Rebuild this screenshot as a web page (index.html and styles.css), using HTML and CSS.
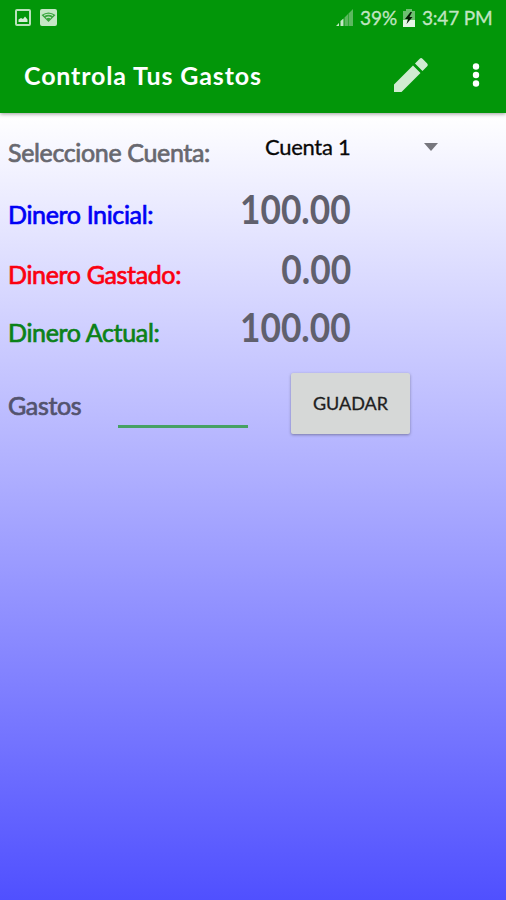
FILE: index.html
```html
<!DOCTYPE html>
<html lang="es">
<head>
<meta charset="utf-8">
<title>Controla Tus Gastos</title>
<link rel="stylesheet" href="styles.css">
</head>
<body>
<header class="top">
  <div class="status">
    <svg class="notice" width="44" height="18" viewBox="0 0 44 18">
      <rect x="1" y="1" width="14" height="15" rx="1" fill="none" stroke="#b9e2bb" stroke-width="2"/>
      <path d="M3.500 13V10.500L6 9l2 1 2-2.500 2.500 3V13z" fill="#d5edd6"/>
      <rect x="25" y="0" width="17" height="17" rx="2" fill="#c5e7c6"/>
      <path d="M26.500 6q7-5 14 0L33.500 13z" fill="#3aa63e"/>
      <path d="M29 6.500q4.500-2.500 9 0M31 9q2.500-1.800 5 0" fill="none" stroke="#c5e7c6" stroke-width="1.200"/>
    </svg>
    <svg class="signal" width="18" height="18" viewBox="0 0 18 18">
      <path d="M0 17l3-3v3zM4.500 17v-5L7.500 9.500V17z" fill="#c5e7c6"/>
      <path d="M8.500 17V8.500L12 5v12zM12.500 17V4.500L17 0v17z" fill="#5cb85f"/>
    </svg>
    <span class="percent">39%</span>
    <svg class="battery" width="12" height="18" viewBox="0 0 12 18">
      <path d="M0 2h3V0h6v2h3v10H0z" fill="#6dbf70"/>
      <path d="M0 11h12v7H0z" fill="#e5f4e5"/>
      <path d="M7.500 3L2 10h3l-1.500 5L9.500 8h-3L9 3z" fill="#041804"/>
    </svg>
    <span class="clock">3:47 PM</span>
  </div>
  <div class="toolbar">
    <h1 class="title">Controla Tus Gastos</h1>
    <svg class="pencil" width="36" height="36" viewBox="0 0 36 36">
      <path d="M1 27.500V35h7.500L27.500 16 20 8.500zM29.500 14l4.700-4.700a2 2 0 0 0 0-2.800L29.500 1.800a2 2 0 0 0-2.800 0L22 6.500z" fill="#d0ebd1"/>
    </svg>
    <svg class="more" width="8" height="24" viewBox="0 0 8 24">
      <circle cx="4" cy="3.500" r="3.200" fill="#fff"/><circle cx="4" cy="12" r="3.200" fill="#fff"/><circle cx="4" cy="20.500" r="3.200" fill="#fff"/>
    </svg>
  </div>
</header>
<main class="content">
  <div class="row account">
    <span class="label select-label">Seleccione Cuenta:</span>
    <div class="spinner"><span class="choice">Cuenta 1</span><i class="arrow"></i></div>
  </div>
  <div class="row initial"><span class="label initial-label">Dinero Inicial:</span><span class="amount">100.00</span></div>
  <div class="row spent"><span class="label spent-label">Dinero Gastado:</span><span class="amount">0.00</span></div>
  <div class="row current"><span class="label current-label">Dinero Actual:</span><span class="amount">100.00</span></div>
  <div class="row entry">
    <span class="label entry-label">Gastos</span>
    <div class="field"></div>
    <button class="save">GUADAR</button>
  </div>
</main>
</body>
</html>
```
FILE: styles.css
```css
* { box-sizing: border-box; }
body {
  margin: 0;
  width: 506px;
  height: 900px;
  overflow: hidden;
  display: flex;
  flex-direction: column;
  font-family: Lato, "Liberation Sans", sans-serif;
}
.top {
  height: 113px;
  flex: none;
  background: #029609;
  box-shadow: 0 1px 4px rgba(0, 0, 0, .4);
  z-index: 1;
}
.status {
  height: 36px;
  padding: 0 14px 0 15px;
  display: flex;
  align-items: center;
  color: #c0e5c1;
  font-size: 19px;
  line-height: 36px;
}
.notice { margin-right: auto; }
.signal { margin-right: 6px; }
.percent { width: 38px; -webkit-text-stroke: .3px; }
.battery { margin: 0 7px 0 5px; }
.clock { width: 70px; white-space: nowrap; letter-spacing: -.2px; -webkit-text-stroke: .3px; }
.toolbar {
  height: 77px;
  padding: 0 26px 0 24px;
  display: flex;
  align-items: center;
}
.title {
  margin: 0 auto 0 0;
  color: #fff;
  font-size: 25px;
  font-weight: 700;
  line-height: 36px;
  letter-spacing: .85px;
}
.pencil { margin-right: 43px; }
.content {
  flex: 1;
  padding: 7px 8px 0;
  background: linear-gradient(#fff, #5050ff);
}
.row { display: flex; align-items: center; }
.label {
  flex: none;
  color: #68686f;
  font-size: 25px;
  line-height: 32px;
  letter-spacing: -.35px;
  white-space: nowrap;
  -webkit-text-stroke: .7px;
}
.account { height: 64px; }
.initial { height: 60px; }
.spent { height: 60px; }
.current { height: 56px; }
.entry { height: 92px; }
.spinner {
  width: 173px;
  margin: 0 60px 10px auto;
  display: flex;
  align-items: center;
  justify-content: space-between;
}
.choice {
  color: #080808;
  font-size: 22px;
  line-height: 28px;
  letter-spacing: -.3px;
  -webkit-text-stroke: .3px;
}
.arrow {
  border: 7px solid transparent;
  border-top: 8px solid #77777e;
  border-bottom: 0;
}
.initial-label { color: #0000f5; }
.spent-label { color: #fb0010; }
.current-label { color: #0b8119; }
.amount {
  margin: 0 147px 10px auto;
  color: #60606d;
  font-size: 41px;
  font-weight: 700;
  line-height: 46px;
  transform: scaleX(.86);
  transform-origin: right;
}
.entry-label { width: 110px; margin-bottom: 3px; color: #53536e; }
.field { width: 130px; height: 44px; border-bottom: 3px solid #46a164; }
.save {
  width: 119px;
  height: 61px;
  margin: 0 0 6px 43px;
  padding: 0;
  border: 0;
  border-radius: 2px;
  background: #d6d8d7;
  box-shadow: 0 1px 3px rgba(0, 0, 0, .35);
  color: #202020;
  font: 18px Lato, "Liberation Sans", sans-serif;
  -webkit-text-stroke: .3px;
}
```
